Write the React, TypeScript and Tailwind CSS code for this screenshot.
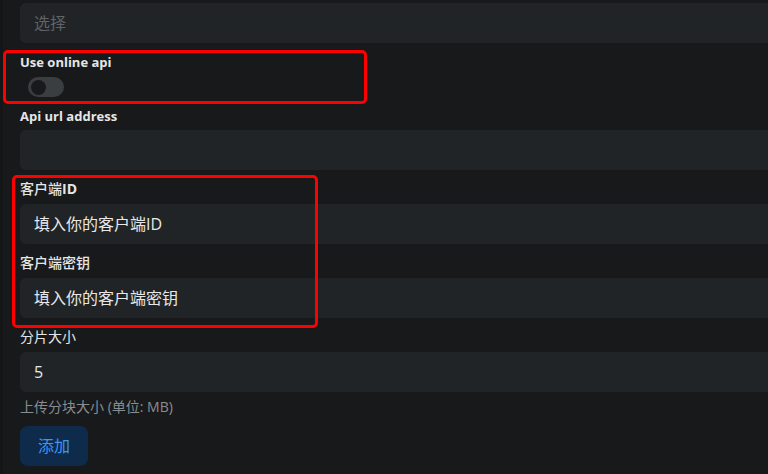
const FONT = '"Open Sans", "Noto Sans CJK SC", sans-serif';

function Label({ children, className = 'font-bold text-[13px]' }: { children: React.ReactNode; className?: string }) {
  return (
    <div className={`h-[18px] leading-[18px] text-[#e6e6e6] ${className}`}>
      {children}
    </div>
  );
}

function Field({ value, placeholder }: { value?: string; placeholder?: string }) {
  return (
    <div className="flex h-10 w-[760px] items-center rounded-md bg-[#212426] pl-[14px] text-[16px]">
      {value ? (
        <span className="text-[#e8e8e8]">{value}</span>
      ) : (
        <span className="text-[#5f6366]">{placeholder}</span>
      )}
    </div>
  );
}

export default function App() {
  return (
    <div
      className="relative flex h-[474px] w-[768px] overflow-hidden bg-[#18191b]"
      style={{ fontFamily: FONT }}
    >
      <div className="w-[3px] shrink-0 bg-[#141517]" />
      <div className="flex flex-col pl-[17px] pt-[3px]">
        <Field placeholder="选择" />

        <div className="mt-[10px]">
          <Label>Use online api</Label>
        </div>
        <div className="ml-[8px] mt-[6px] flex h-5 w-9 items-center rounded-full bg-[#3a3e41] px-[3px]">
          <div className="h-[15px] w-[15px] rounded-full bg-[#18191b]" />
        </div>

        <div className="mt-[10px]">
          <Label>Api url address</Label>
        </div>
        <div className="mt-[5px]">
          <Field />
        </div>

        <div className="mt-[10px]">
          <Label className="text-[14px] font-medium">
            客户端<span className="font-bold">ID</span>
          </Label>
        </div>
        <div className="mt-[6px]">
          <Field value="填入你的客户端ID" />
        </div>

        <div className="mt-[10px]">
          <Label className="text-[14px] font-medium">客户端密钥</Label>
        </div>
        <div className="mt-[6px]">
          <Field value="填入你的客户端密钥" />
        </div>

        <div className="mt-[10px]">
          <Label className="text-[14px] font-normal">分片大小</Label>
        </div>
        <div className="mt-[6px]">
          <Field value="5" />
        </div>

        <div className="mt-[6px] h-[18px] text-[14px] leading-[18px] text-[#8a8d90]">
          上传分块大小 (单位: MB)
        </div>

        <button className="mt-[10px] flex h-10 w-[68px] items-center justify-center rounded-lg bg-[#0f2b4b] text-[16px] text-[#3d96f0]">
          添加
        </button>
      </div>

      {/* annotation boxes */}
      <div className="absolute left-[3px] top-[50px] h-[54px] w-[364px] rounded-[5px] border-[3px] border-[#ff0000]" />
      <div className="absolute left-[12px] top-[175px] h-[153px] w-[306px] rounded-[5px] border-[3px] border-[#ff0000]" />
    </div>
  );
}
